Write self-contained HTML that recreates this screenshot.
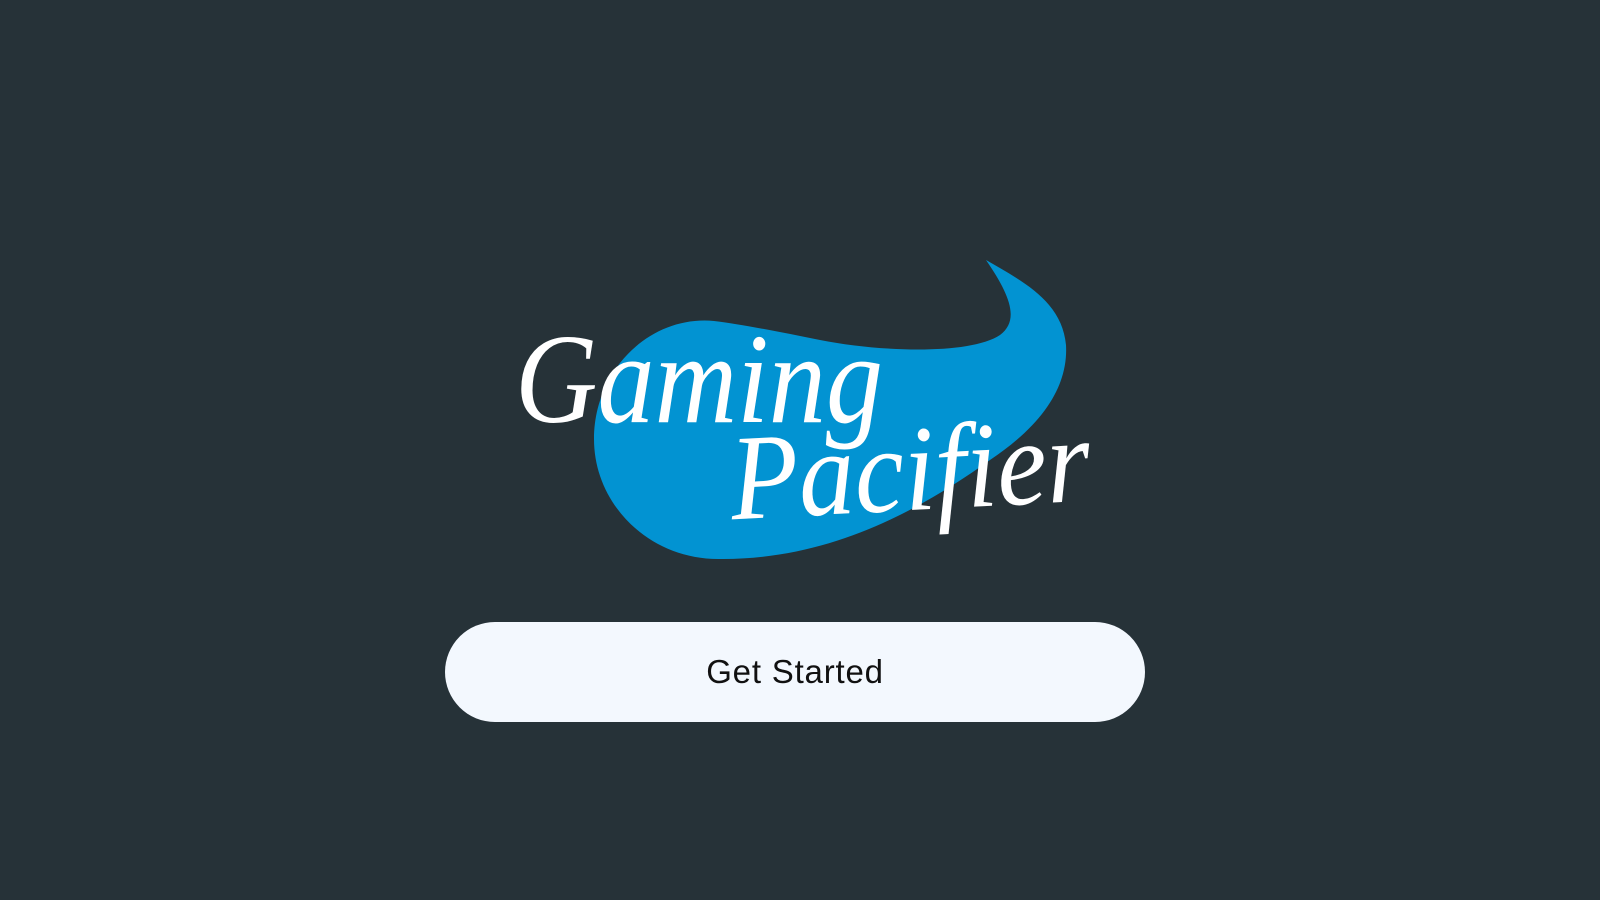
<!DOCTYPE html>
<html><head><meta charset="utf-8"><style>
html,body{margin:0;padding:0;width:1600px;height:900px;background:#263238;overflow:hidden}
.btn{position:absolute;left:445px;top:622px;width:700px;height:100px;border-radius:50px;background:#f3f8fe;display:flex;align-items:center;justify-content:center;font-family:"Liberation Sans",sans-serif;font-size:33px;color:#111;letter-spacing:0.8px}
svg{position:absolute;left:0;top:0}
</style></head><body>
<svg width="1600" height="900" viewBox="0 0 1600 900">
<path fill="#0293d2" d="M714 321 C650 315 594 370 594 439 C594 505 650 560 720 559 C830 560 920 510 990 460 C1050 420 1068 380 1066 345 C1062 300 1020 280 986 260 C1010 295 1020 320 1000 335 C970 355 880 352 820 340 C780 332 740 324 714 321 Z"/>
<text x="515" y="422" fill="#fff" font-family="Liberation Serif, serif" font-style="italic" font-size="128" textLength="368" lengthAdjust="spacingAndGlyphs">Gaming</text>
<text x="730" y="510" fill="#fff" font-family="Liberation Serif, serif" font-style="italic" font-size="122" textLength="360" lengthAdjust="spacingAndGlyphs" transform="rotate(-3 910 470)">Pacifier</text>
</svg>
<div class="btn">Get Started</div>
</body></html>
